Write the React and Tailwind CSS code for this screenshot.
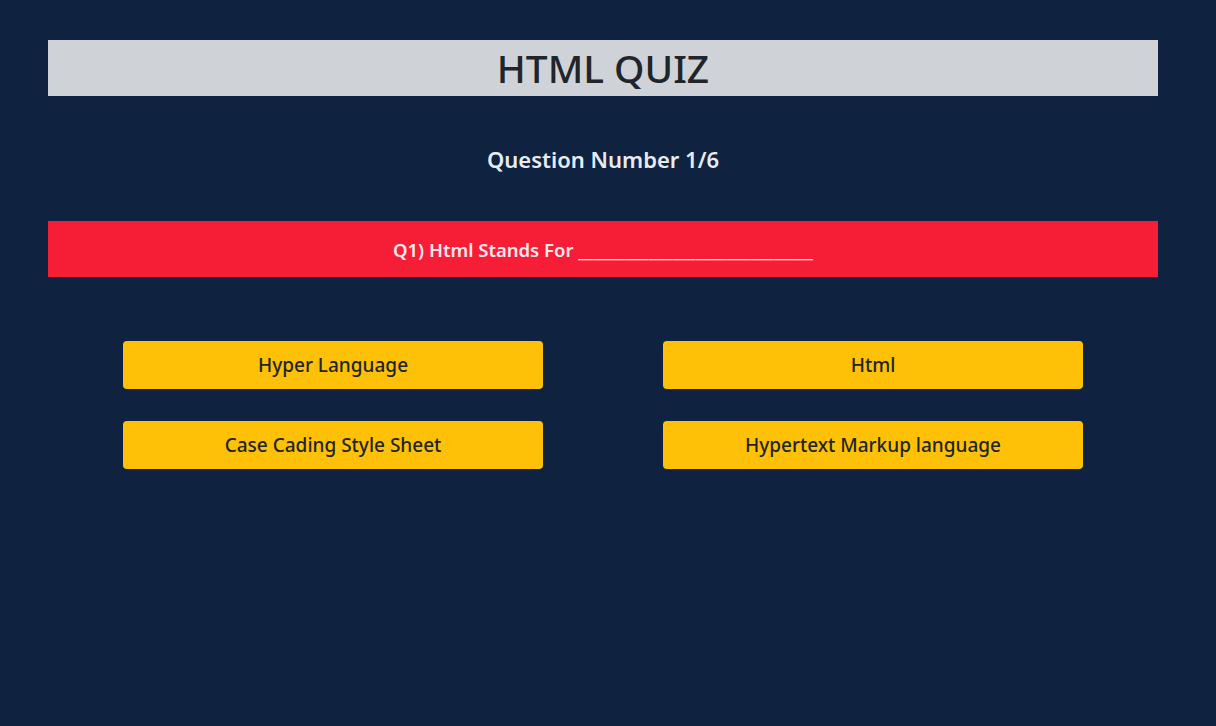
const options = [
  "Hyper Language",
  "Html",
  "Case Cading Style Sheet",
  "Hypertext Markup language",
];

export default function App() {
  return (
    <div
      className="min-h-[726px] bg-[#0f2240] pt-10"
      style={{ fontFamily: '"Noto Sans", "Open Sans", sans-serif' }}
    >
      <div className="ml-12 w-[1110px]">
        <div className="h-14 bg-[#cfd2d6] flex items-center justify-center">
          <h1 className="text-[38.8px] font-medium text-[#212529] leading-none">HTML QUIZ</h1>
        </div>

        <h2 className="mt-[50px] text-center text-[22px] font-semibold text-[#e6ecf3] leading-[26px]">
          Question Number 1/6
        </h2>

        <div className="mt-[49px] h-14 bg-[#f61e37] flex items-center justify-center">
          <p className="text-[18.5px] font-semibold text-[#fde8ec] pt-px">
            Q1) Html Stands For ______________________________
          </p>
        </div>

        <div className="mt-16 px-[75px] grid grid-cols-2 gap-x-[120px] gap-y-8">
          {options.map((opt) => (
            <button
              key={opt}
              className="h-12 rounded bg-[#ffc107] text-[19px] text-[#212529] font-medium pt-px"
            >
              {opt}
            </button>
          ))}
        </div>
      </div>
    </div>
  );
}
